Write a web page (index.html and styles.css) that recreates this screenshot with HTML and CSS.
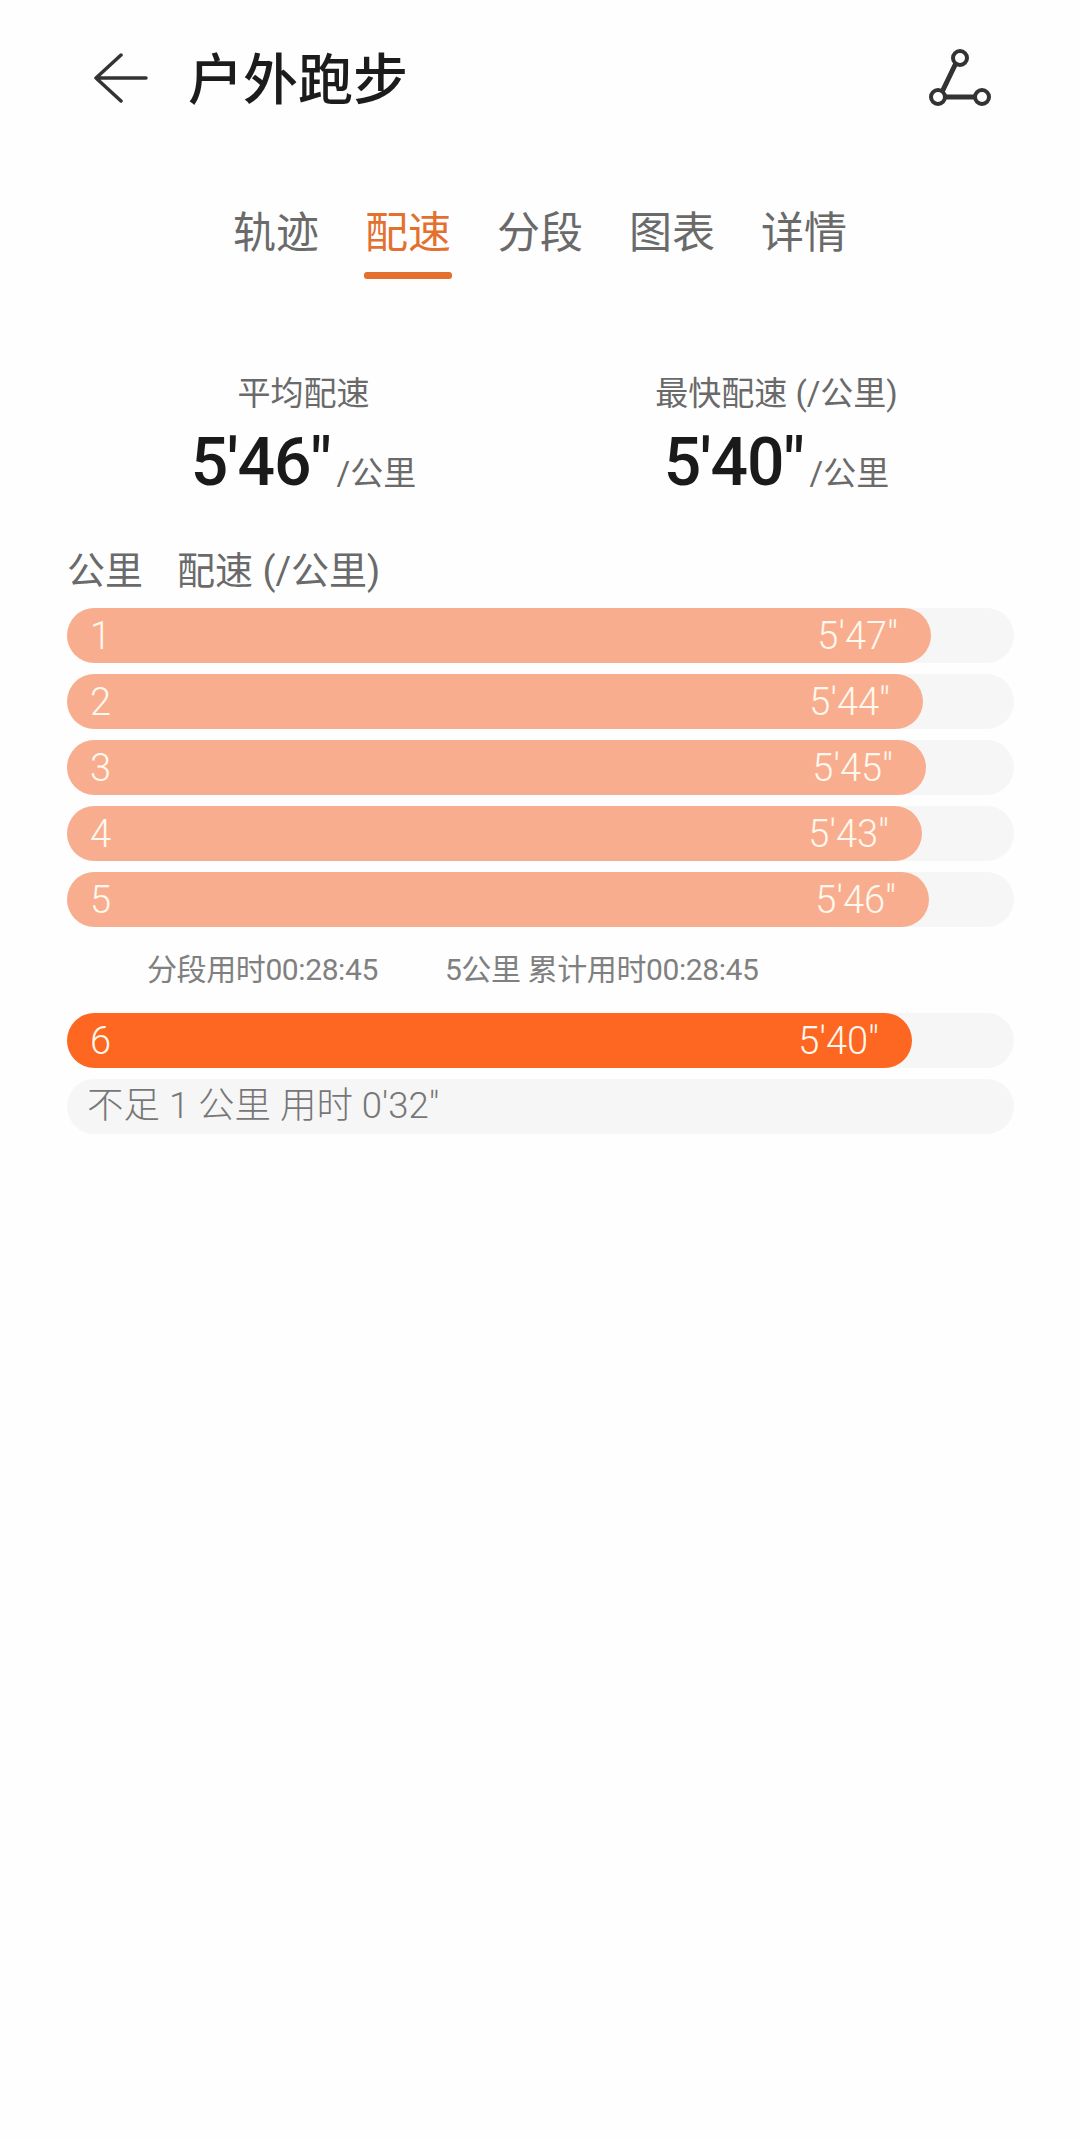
FILE: index.html
```html
<!DOCTYPE html>
<html lang="zh-CN">
<head>
    <meta charset="UTF-8">
    <meta name="viewport" content="width=device-width, initial-scale=1.0">
    <title>户外跑步</title>
    <link rel="stylesheet" href="styles.css">
</head>
<body>

<!-- 顶部标题栏 -->
<header class="topbar">
    <svg class="back-icon" width="56" height="50" viewBox="0 0 56 50">
        <path d="M27 2 L2 25 L27 48 M2 25 H52" fill="none" stroke="#333" stroke-width="3.5" stroke-linecap="round" stroke-linejoin="round"/>
    </svg>
    <h1 class="title">户外跑步</h1>
    <svg class="route-icon" width="62" height="58" viewBox="0 0 62 58">
        <path d="M27 14 L13 43 M16 48 H46" fill="none" stroke="#333" stroke-width="5"/>
        <circle cx="31" cy="9" r="7" fill="#fefefe" stroke="#333" stroke-width="4"/>
        <circle cx="9" cy="48" r="7" fill="#fefefe" stroke="#333" stroke-width="4"/>
        <circle cx="53" cy="48" r="7" fill="#fefefe" stroke="#333" stroke-width="4"/>
    </svg>
</header>

<nav class="tabs">
    <div class="tab">轨迹</div>
    <div class="tab active">配速</div>
    <div class="tab">分段</div>
    <div class="tab">图表</div>
    <div class="tab">详情</div>
</nav>

<section class="stats">
    <div class="stat">
        <div class="stat-label">平均配速</div>
        <div class="stat-value">5'46"<span class="stat-unit">/公里</span></div>
    </div>
    <div class="stat">
        <div class="stat-label">最快配速 (/公里)</div>
        <div class="stat-value">5'40"<span class="stat-unit">/公里</span></div>
    </div>
</section>

<div class="list-head">
    <span class="head-km">公里</span>
    <span>配速 (/公里)</span>
</div>

<section class="splits">
    <div class="track"><div class="bar" style="width: 864px"><span>1</span><span>5'47"</span></div></div>
    <div class="track"><div class="bar" style="width: 856px"><span>2</span><span>5'44"</span></div></div>
    <div class="track"><div class="bar" style="width: 859px"><span>3</span><span>5'45"</span></div></div>
    <div class="track"><div class="bar" style="width: 855px"><span>4</span><span>5'43"</span></div></div>
    <div class="track"><div class="bar" style="width: 862px"><span>5</span><span>5'46"</span></div></div>

    <div class="summary">
        <span>分段用时00:28:45</span>
        <span>5公里 累计用时00:28:45</span>
    </div>

    <div class="track"><div class="bar fastest" style="width: 845px"><span>6</span><span>5'40"</span></div></div>
    <div class="track rest">不足 1 公里 用时 0'32"</div>
</section>

</body>
</html>
```

FILE: styles.css
```css
body {
    margin: 0;
    padding: 0;
    height: 2138px;
    background-color: #fefefe;
    font-family: Roboto, "Noto Sans CJK SC", sans-serif;
    color: #6a6a6a;
    overflow: hidden;
}

.topbar {
    display: flex;
    align-items: center;
    height: 156px;
    padding: 0 89px 0 94px;
}

.back-icon {
    flex: none;
}

.title {
    flex: 1;
    margin: 0 0 0 38px;
    padding-bottom: 6px;
    font-size: 55px;
    font-weight: 500;
    color: #1c1c1c;
}

.route-icon {
    flex: none;
}

.tabs {
    display: flex;
    justify-content: center;
    height: 170px;
    margin-top: 45px;
}

.tab {
    position: relative;
    width: 132px;
    height: 64px;
    line-height: 64px;
    text-align: center;
    font-size: 43px;
    color: #6a6a6a;
}

.tab.active {
    color: #e4702f;
}

.tab.active::after {
    content: '';
    position: absolute;
    left: 22px;
    top: 71px;
    width: 88px;
    height: 7px;
    border-radius: 3px;
    background-color: #e4702f;
}

.stats {
    display: grid;
    grid-template-columns: 473px 473px;
    padding: 0 67px;
}

.stat {
    text-align: center;
}

.stat-label {
    height: 46px;
    line-height: 46px;
    font-size: 33px;
}

.stat-value {
    height: 88px;
    line-height: 88px;
    margin-top: 2px;
    font-size: 66px;
    font-weight: 500;
    letter-spacing: -1px;
    color: #1a1a1a;
}

.stat-unit {
    margin-left: 6px;
    font-size: 33px;
    font-weight: 400;
    letter-spacing: 0;
    color: #6a6a6a;
}

.list-head {
    display: flex;
    height: 50px;
    line-height: 50px;
    margin-top: 39px;
    padding-left: 67px;
    font-size: 38px;
}

.head-km {
    width: 110px;
}

.splits {
    display: flex;
    flex-direction: column;
    gap: 11px;
    margin: 12px 66px 0 67px;
}

.track {
    height: 55px;
    border-radius: 28px;
    background-color: #f6f6f6;
}

.bar {
    display: flex;
    justify-content: space-between;
    align-items: center;
    box-sizing: border-box;
    height: 55px;
    padding: 0 33px 0 23px;
    border-radius: 28px;
    background-color: #f8ae8e;
    font-size: 38px;
    font-weight: 300;
    color: #fff8ee;
}

.bar.fastest {
    background-color: #fd6721;
}

.summary {
    display: flex;
    gap: 67px;
    height: 64px;
    line-height: 64px;
    padding-left: 80px;
    font-size: 30px;
    letter-spacing: -0.4px;
    color: #808080;
}

.rest {
    padding-left: 20px;
    line-height: 53px;
    font-size: 36.5px;
    font-weight: 300;
    color: #777;
}
```
